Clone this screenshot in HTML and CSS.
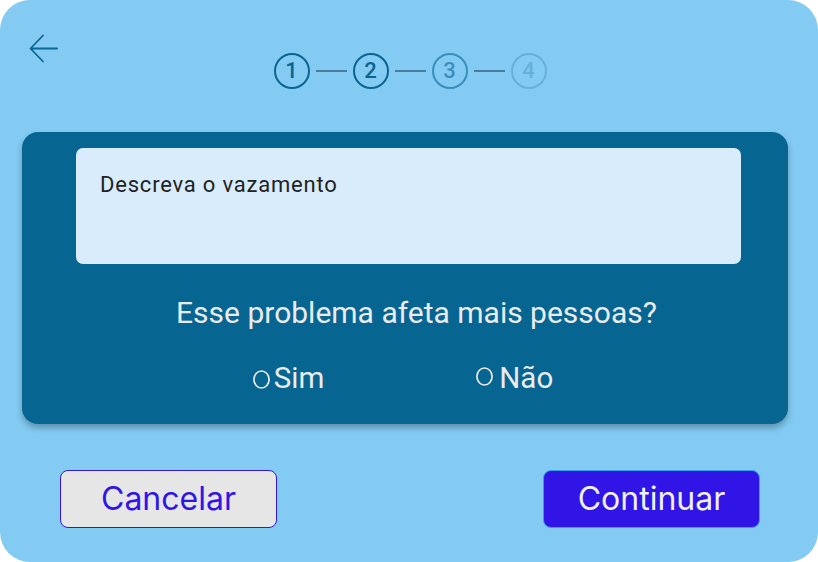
FILE: index.html
```html
<!DOCTYPE html>
<html lang="pt-BR">
<head>
<meta charset="utf-8">
<title>Vazamento</title>
<link rel="stylesheet" href="styles.css">
</head>
<body>
<div class="screen">
  <header class="header">
    <button class="back" aria-label="Voltar">
      <svg width="30" height="30" viewBox="0 0 30 30" fill="none" stroke="#0a6896" stroke-width="1.8" stroke-linecap="round" stroke-linejoin="round">
        <path d="M28 14.5H1.5M14 1.5L1.5 14.5L14 27.5"/>
      </svg>
    </button>
    <ol class="stepper">
      <li class="step step-done">1</li>
      <li class="connector"></li>
      <li class="step step-done">2</li>
      <li class="connector"></li>
      <li class="step step-next">3</li>
      <li class="connector"></li>
      <li class="step step-todo">4</li>
    </ol>
    <div></div>
  </header>

  <section class="card">
    <div class="textbox">Descreva o vazamento</div>
    <p class="question">Esse problema afeta mais pessoas?</p>
    <div class="options">
      <label class="option">
        <svg class="radio" width="17" height="19" viewBox="0 0 17 19"><ellipse cx="8.5" cy="9.5" rx="7.6" ry="8.5" fill="none" stroke="#ebebeb" stroke-width="1.7"/></svg>Sim</label>
      <label class="option option-no">
        <svg class="radio" width="17" height="19" viewBox="0 0 17 19"><ellipse cx="8.5" cy="9.5" rx="7.6" ry="8.5" fill="none" stroke="#ebebeb" stroke-width="1.7"/></svg>Não</label>
    </div>
  </section>

  <footer class="actions">
    <button class="btn btn-cancel">Cancelar</button>
    <button class="btn btn-continue">Continuar</button>
  </footer>
</div>
</body>
</html>
```
FILE: styles.css
```css
* { box-sizing: border-box; }
html, body { margin: 0; padding: 0; background: #ffffff; }
body { font-family: Roboto, "Liberation Sans", sans-serif; }

.screen {
  width: 818px;
  height: 562px;
  background: #83cbf3;
  border-radius: 30px;
  padding: 0 30px 0 22px;
  display: flex;
  flex-direction: column;
  overflow: hidden;
}

.header {
  display: grid;
  grid-template-columns: 1fr auto 1fr;
  align-items: start;
  padding-top: 34px;
}

.back {
  margin: 0 0 0 7px;
  padding: 0;
  border: 0;
  background: none;
  width: 30px;
  height: 30px;
  justify-self: start;
  display: block;
}
.back svg { display: block; }

.stepper {
  list-style: none;
  margin: 19px 0 0 10px;
  padding: 0;
  display: flex;
  align-items: center;
  gap: 6px;
}

.step {
  width: 36px;
  height: 36px;
  border-radius: 50%;
  border: 2px solid currentColor;
  display: flex;
  align-items: center;
  justify-content: center;
  font-family: Roboto, sans-serif;
  font-weight: 500;
  font-size: 22px;
  line-height: 1;
}
.step-done { color: #0b6592; }
.step-next { color: #3a8ebd; }
.step-todo { color: #66b0d9; }

.connector {
  width: 31px;
  height: 2px;
  background: #4a7d9c;
}

.card {
  margin-top: 43px;
  background: #066591;
  border-radius: 16px;
  box-shadow: 0 4px 6px rgba(0, 0, 0, 0.28);
  padding: 16px 0 29px 0;
}

.textbox {
  margin: 0 47px 0 54px;
  height: 116px;
  background: #d9ecfc;
  border-radius: 7px;
  padding: 24px 24px 0 24px;
  font-size: 22px;
  line-height: 26px;
  letter-spacing: 0.8px;
  color: #222222;
}

.question {
  margin: 32px 0 0 0;
  padding-left: 23px;
  text-align: center;
  color: #ebebeb;
  font-size: 30px;
  line-height: 34px;
}

.options {
  margin-top: 31px;
  display: flex;
  justify-content: center;
  gap: 152px;
  padding-right: 4px;
}

.option {
  display: flex;
  align-items: flex-end;
  color: #ebebeb;
  font-size: 29.5px;
  line-height: 34px;
}

.radio {
  flex: 0 0 auto;
  display: block;
  margin: 0 4px 6px 0;
}
.option-no .radio { margin: 0 6px 9px 0; }

.actions {
  margin-top: 46px;
  display: flex;
  justify-content: space-between;
  padding: 0 28px 0 38px;
}

.btn {
  width: 217px;
  height: 58px;
  border-radius: 8px;
  font-family: Inter, sans-serif;
  font-size: 32px;
  line-height: 1;
  padding: 0;
}
.btn-cancel {
  background: #e6e6e6;
  border: 1px solid #3114e6;
  color: #3114e6;
}
.btn-continue {
  background: #3114e6;
  border: 1px solid #36a0f0;
  color: #f0f0f0;
}
```
